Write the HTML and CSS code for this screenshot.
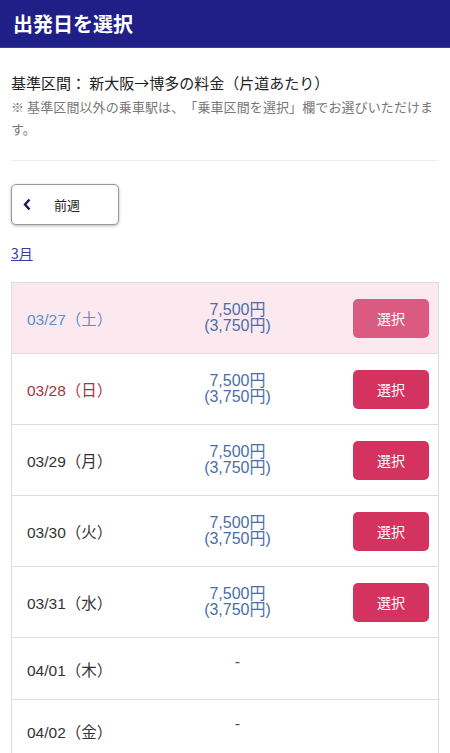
FILE: index.html
```html
<!DOCTYPE html>
<html lang="ja">
<head>
    <meta charset="UTF-8">
    <meta name="viewport" content="width=device-width, initial-scale=1.0">
    <title>出発日を選択</title>

    <link rel="stylesheet" href="styles.css">
</head>
<body>

    <div class="header">出発日を選択</div>

    <div class="content">
        <p class="route">基準区間：&nbsp;新大阪→博多の料金（片道あたり）</p>
        <p class="note">※ 基準区間以外の乗車駅は、「乗車区間を選択」欄でお選びいただけます。</p>

        <div class="divider"></div>

        <button type="button" class="prev-button">
            <svg class="chevron" width="9" height="13" viewBox="0 0 9 13">
                <path d="M6.5 1.5 L2 6.5 L6.5 11.5" fill="none" stroke="#1a1a5e" stroke-width="2.4"/>
            </svg>
            <span>前週</span>
        </button>

        <a href="#" class="month">3月</a>

        <div class="day-list">
            <div class="day-row today">
                <div class="day-date">03/27（土）</div>
                <div class="day-price">7,500円<br>(3,750円)</div>
                <div class="day-action"><button type="button" class="select-button">選択</button></div>
            </div>
            <div class="day-row">
                <div class="day-date sunday">03/28（日）</div>
                <div class="day-price">7,500円<br>(3,750円)</div>
                <div class="day-action"><button type="button" class="select-button">選択</button></div>
            </div>
            <div class="day-row">
                <div class="day-date">03/29（月）</div>
                <div class="day-price">7,500円<br>(3,750円)</div>
                <div class="day-action"><button type="button" class="select-button">選択</button></div>
            </div>
            <div class="day-row">
                <div class="day-date">03/30（火）</div>
                <div class="day-price">7,500円<br>(3,750円)</div>
                <div class="day-action"><button type="button" class="select-button">選択</button></div>
            </div>
            <div class="day-row">
                <div class="day-date">03/31（水）</div>
                <div class="day-price">7,500円<br>(3,750円)</div>
                <div class="day-action"><button type="button" class="select-button">選択</button></div>
            </div>
            <div class="day-row empty">
                <div class="day-date">04/01（木）</div>
                <div class="day-price">-</div>
                <div class="day-action"></div>
            </div>
            <div class="day-row empty">
                <div class="day-date">04/02（金）</div>
                <div class="day-price">-</div>
                <div class="day-action"></div>
            </div>
        </div>
    </div>

</body>
</html>
```

FILE: styles.css
```css
body {
    font-family: "Noto Sans CJK JP", "Noto Sans", sans-serif;
    margin: 0;
    padding: 0;
    background-color: #fff;
    color: #222;
    text-spacing-trim: space-all;
}

/* Title bar */
.header {
    height: 47px;
    background-color: #1f1f87;
    border-bottom: 1px solid #3b3ba0;
    color: #fff;
    font-size: 20px;
    font-weight: bold;
    display: flex;
    align-items: center;
    padding: 0 13px;
}

.content {
    padding: 0 11px;
}

.route {
    margin: 24px 0 0;
    font-size: 15px;
    line-height: 22px;
    color: #222;
}

.note {
    margin: 2px 0 0;
    font-size: 13px;
    letter-spacing: 0.1px;
    line-height: 22px;
    color: #777;
}

.divider {
    height: 1px;
    background-color: #eee;
    margin-top: 20px;
}

.prev-button {
    margin-top: 23px;
    width: 108px;
    height: 41px;
    background-color: #fff;
    border: 1px solid #999;
    border-radius: 5px;
    box-shadow: 0 1px 3px rgba(0, 0, 0, 0.3);
    display: flex;
    align-items: center;
    padding: 0 0 0 11px;
    font-family: inherit;
    font-size: 13px;
    color: #222;
    cursor: pointer;
}

.prev-button span {
    margin-left: 22px;
}

.month {
    display: inline-block;
    margin-top: 18px;
    font-size: 14px;
    line-height: 20px;
    color: #3b3b9b;
}

/* Day list */
.day-list {
    margin-top: 18px;
    border: 1px solid #ddd;
    border-bottom: none;
}

.day-row {
    display: grid;
    grid-template-columns: 121px 1fr 96px;
    align-items: center;
    height: 70px;
    border-bottom: 1px solid #ddd;
}

.day-row.today {
    background-color: #fce9f0;
}

.day-row.empty {
    height: 61px;
}

.day-date {
    padding-left: 15px;
    font-family: "Liberation Sans", "Noto Sans CJK JP", sans-serif;
    font-size: 15.5px;
    color: #333;
    white-space: nowrap;
}

.today .day-date {
    color: #5e8fcb;
}

.day-date.sunday {
    color: #a8323f;
}

.day-price {
    text-align: center;
    font-family: "Liberation Sans", "Noto Sans CJK JP", sans-serif;
    font-size: 16px;
    line-height: 16px;
    color: #4b6ea8;
}

.empty .day-price {
    color: #555;
    margin-top: -14px;
}

.day-action {
    display: flex;
    justify-content: flex-end;
    padding-right: 9px;
}

.select-button {
    width: 76px;
    height: 39px;
    background-color: #d4325f;
    color: #fff;
    border: none;
    border-radius: 5px;
    font-family: inherit;
    font-size: 14px;
    cursor: pointer;
}

.today .select-button {
    background-color: #db5a82;
}
```
